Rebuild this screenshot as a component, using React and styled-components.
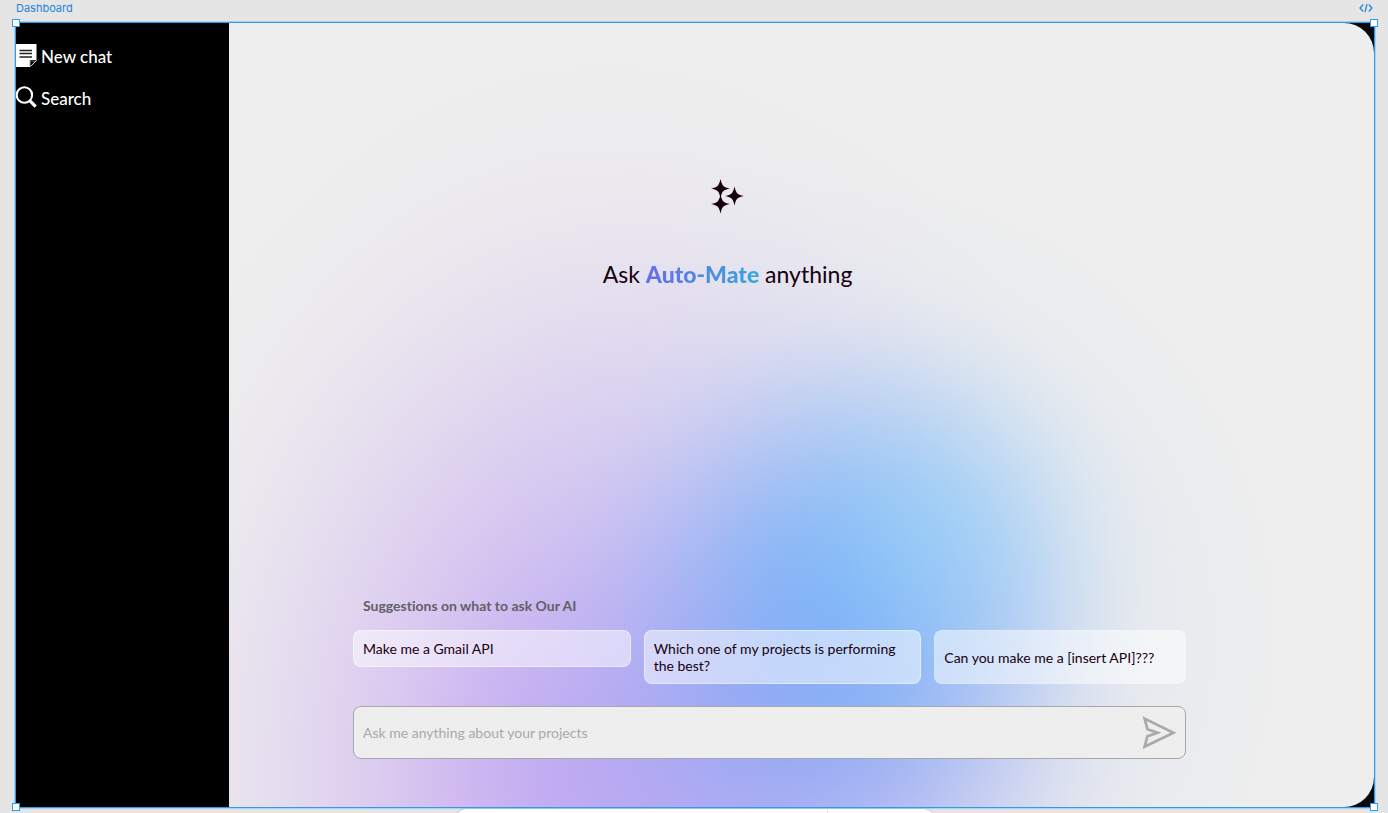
import React from 'react';
import styled, { createGlobalStyle } from 'styled-components';

const GlobalStyle = createGlobalStyle`
  *, *::before, *::after { box-sizing: border-box; }
  body {
    margin: 0;
    background: #e5e5e5;
    font-family: Lato, "Liberation Sans", sans-serif;
    font-variant-ligatures: none;
  }
  button, input { font: inherit; }
  svg { display: block; }
`;

const blue = '#2b9cf2';

const Canvas = styled.div`
  display: flex;
  flex-direction: column;
  min-height: 100vh;
`;

const FrameBar = styled.header`
  display: flex;
  justify-content: space-between;
  align-items: flex-start;
  height: 22px;
  padding: 1px 15px 0 16px;
  color: #1c84dd;
  font: 400 11px/14px Inter, sans-serif;
`;

const CodeButton = styled.button`
  padding: 2px 0 0;
  border: 0;
  background: none;
  color: inherit;
`;

const Frame = styled.div`
  position: relative;
  display: flex;
  flex: 1;
  margin: 0 13px 0 15px;
  border: 1px solid ${blue};
  background: #08090b;
  box-shadow: 0 0 0 1px rgba(43, 156, 242, 0.3);
`;

const Handle = styled.span`
  position: absolute;
  ${(p) => p.$v}: -4px;
  ${(p) => p.$h}: -4px;
  width: 8px;
  height: 8px;
  border: 1px solid ${blue};
  background: #fff;
`;

const Sidebar = styled.nav`
  display: flex;
  flex-direction: column;
  gap: 18px;
  width: 213px;
  padding-top: 21px;
  background: #000;
`;

const NavButton = styled.button`
  display: flex;
  align-items: center;
  gap: 4px;
  height: 24px;
  padding: 0;
  border: 0;
  background: none;
  color: #fff;
  font-size: 17px;
  font-weight: 500;
  line-height: 24px;
`;

const NavText = styled.span`
  padding-top: 2px;
`;

const falloff = (rgb, a) =>
  [[1, 0], [0.94, 12], [0.79, 25], [0.6, 37], [0.4, 50], [0.24, 62], [0.11, 75], [0.03, 87], [0, 100]]
    .map(([k, at]) => `rgba(${rgb}, ${(k * a).toFixed(3)}) ${at}%`)
    .join(', ');

const Main = styled.main`
  display: flex;
  flex: 1;
  flex-direction: column;
  justify-content: space-between;
  gap: 40px;
  min-width: 0;
  border-radius: 0 30px 30px 0;
  background:
    radial-gradient(22% 32% at 61% 66%, ${falloff('155, 217, 248', 0.48)}),
    radial-gradient(26% 41% at 54% 73%, ${falloff('100, 165, 248', 0.72)}),
    radial-gradient(34% 42% at 48% 92%, ${falloff('145, 150, 243', 0.5)}),
    radial-gradient(44% 66% at 53% 78%, ${falloff('175, 202, 246', 0.5)}),
    radial-gradient(47% 94% at 33% 96%, ${falloff('192, 150, 242', 0.78)}),
    #eee;
`;

const Hero = styled.section`
  display: flex;
  flex-direction: column;
  align-items: center;
  gap: 44px;
  padding: 156px 148px 0 0;
`;

const Title = styled.h1`
  margin: 0;
  color: #17000f;
  font-size: 23px;
  font-weight: 400;
  line-height: 30px;
`;

const Brand = styled.strong`
  background: linear-gradient(90deg, #656de8, #37a8dc);
  background-clip: text;
  color: transparent;
  font-weight: 900;
`;

const Composer = styled.section`
  display: flex;
  flex-direction: column;
  margin: 0 188px 48px 124px;
  font-size: 14px;
  line-height: 17px;
`;

const SuggestionsTitle = styled.h2`
  margin: 0 10px 16px;
  color: #626066;
  font-size: 14px;
  font-weight: 700;
  line-height: 17px;
`;

const Suggestions = styled.div`
  display: grid;
  grid-template-columns: 278fr 278fr 252fr;
  align-items: start;
  gap: 13px;
  margin-bottom: 22px;
`;

const Suggestion = styled.button`
  align-self: ${(p) => (p.$fill ? 'stretch' : 'start')};
  padding: 9px;
  border: 1px solid rgba(255, 255, 255, ${(p) => (p.$fill ? 0.2 : 0.45)});
  border-radius: 8px;
  background: rgba(255, 255, 255, 0.5);
  color: #17000f;
  text-align: left;
`;

const PromptForm = styled.form`
  display: flex;
  align-items: center;
  height: 53px;
  padding: 0 9px;
  border: 1px solid #aaa7ab;
  border-radius: 8px;
  background: #eee;
`;

const PromptInput = styled.input`
  flex: 1;
  min-width: 0;
  padding: 0;
  border: 0;
  outline: 0;
  background: none;
  color: #17000f;
  &::placeholder { color: #a9a9a9; opacity: 1; }
`;

const SendButton = styled.button`
  padding: 0;
  border: 0;
  background: none;
`;

const DockClip = styled.footer`
  display: flex;
  justify-content: center;
  height: 5px;
  overflow: hidden;
`;

const Dock = styled.div`
  display: flex;
  width: 480px;
  height: 40px;
  margin: 1px 0 0 2px;
  border-radius: 12px;
  background: #fff;
  box-shadow: 0 0 2px rgba(0, 0, 0, 0.25);
`;

const DockTools = styled.div`
  width: 373px;
  border-right: 1px solid #e3e3e3;
`;

const CodeIcon = () => (
  <svg width="14" height="10" viewBox="0 0 14 10" fill="none" stroke="currentColor" strokeWidth="1.2" aria-hidden="true">
    <path d="M4.2 1.5 1 5l3.2 3.5M9.8 1.5 13 5 9.8 8.500M8 1 6 9" />
  </svg>
);

const NoteIcon = () => (
  <svg width="21" height="24" viewBox="0 0 21 24" aria-hidden="true">
    <path d="M0 0h20.500v16.500L14 23H0z" fill="#fff" />
    <path d="M3.500 6.500h12.500M3.500 9.500h12.500M3.500 13h12.500" stroke="#222" strokeWidth="1.300" />
    <path d="M14.500 22.500v-5.700h5.600z" fill="#000" stroke="#fff" strokeWidth=".8" />
    <path d="M14.300 22.500v-6h5.700" fill="none" stroke="#000" strokeWidth=".8" />
  </svg>
);

const SearchIcon = () => (
  <svg width="21" height="24" viewBox="0 0 21 24" fill="none" stroke="#fff" aria-hidden="true">
    <circle cx="8.400" cy="9" r="7.700" strokeWidth="2.100" />
    <path d="m13.800 14.600 5.900 6" strokeWidth="3.200" />
  </svg>
);

const star = 'C.9 -5.500 2.100 -3 3 -2.600 4.200 -1.500 6 -.8 9.500 0 6 .8 4.200 1.500 3 2.600 2.100 3 .9 5.500 0 9.500 -.9 5.500 -2.100 3 -3 2.600 -4.200 1.500 -6 .8 -9.500 0 -6 -.8 -4.200 -1.500 -3 -2.600 -2.100 -3 -.9 -5.500 0 -9.500Z';

const SparklesIcon = () => (
  <svg width="34" height="36" viewBox="0 0 34 36" fill="#17000f" aria-hidden="true">
    {[[9.5, 9.5], [23.5, 17], [9.5, 25]].map(([x, y]) => (
      <path key={`${x}-${y}`} transform={`translate(${x} ${y})`} d={`M0 -9.500${star}`} />
    ))}
  </svg>
);

const SendIcon = () => (
  <svg width="34" height="34" viewBox="0 0 34 34" fill="none" stroke="#a9a9a9" strokeWidth="2.700" aria-hidden="true">
    <path d="M2.600 2.600 31.500 16.700 2.600 30.800 5.400 20.200 15.500 16.700 5.400 13.200Z" />
  </svg>
);

const suggestions = [
  { text: 'Make me a Gmail API' },
  { text: 'Which one of my projects is performing the best?' },
  { text: 'Can you make me a [insert API]???', fill: true },
];

export default function App() {
  return (
    <Canvas>
      <GlobalStyle />
      <FrameBar>
        <span>Dashboard</span>
        <CodeButton type="button" aria-label="View code"><CodeIcon /></CodeButton>
      </FrameBar>
      <Frame>
        <Sidebar>
          <NavButton type="button"><NoteIcon /><NavText>New chat</NavText></NavButton>
          <NavButton type="button"><SearchIcon /><NavText>Search</NavText></NavButton>
        </Sidebar>
        <Main>
          <Hero>
            <SparklesIcon />
            <Title>Ask <Brand>Auto-Mate</Brand> anything</Title>
          </Hero>
          <Composer>
            <SuggestionsTitle>Suggestions on what to ask Our AI</SuggestionsTitle>
            <Suggestions>
              {suggestions.map((s) => (
                <Suggestion key={s.text} type="button" $fill={s.fill}>{s.text}</Suggestion>
              ))}
            </Suggestions>
            <PromptForm onSubmit={(e) => e.preventDefault()}>
              <PromptInput aria-label="Ask a question" placeholder="Ask me anything about your projects" />
              <SendButton type="submit" aria-label="Send"><SendIcon /></SendButton>
            </PromptForm>
          </Composer>
        </Main>
        <Handle $v="top" $h="left" />
        <Handle $v="top" $h="right" />
        <Handle $v="bottom" $h="left" />
        <Handle $v="bottom" $h="right" />
      </Frame>
      <DockClip>
        <Dock><DockTools /></Dock>
      </DockClip>
    </Canvas>
  );
}
